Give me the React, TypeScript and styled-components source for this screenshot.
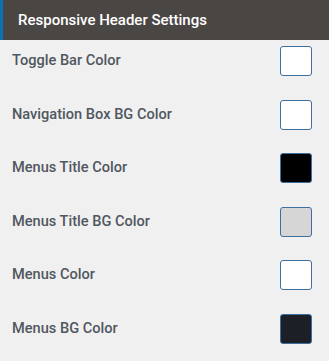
import styled, { createGlobalStyle } from 'styled-components'

const GlobalStyle = createGlobalStyle`
  body {
    margin: 0;
    background: #f0f0f1;
    font-family: Roboto, "Noto Sans", Arial, sans-serif;
  }
`

const Panel = styled.div`
  width: 329px;
  height: 361px;
  background: #f0f0f1;
  overflow: hidden;
`

const Header = styled.h3`
  margin: 0;
  height: 40px;
  display: flex;
  align-items: center;
  padding-left: 15px;
  background: #4a4644;
  border-left: 3px solid #0a73b5;
  color: #fff;
  font-size: 15px;
  font-weight: 500;
`

const List = styled.div`
  display: flex;
  flex-direction: column;
  gap: 23.6px;
  padding: 6px 17px 0 12px;
`

const Row = styled.div`
  display: flex;
  align-items: center;
  justify-content: space-between;
  height: 30px;
`

const Label = styled.span`
  color: #50575e;
  font-size: 14.6px;
  font-weight: 500;
  margin-top: -2px;
`

const Swatch = styled.button<{ $color: string }>`
  width: 32px;
  height: 30px;
  padding: 0;
  border: 1px solid #3d6fa0;
  border-radius: 3px;
  background: ${(p) => p.$color};
`

const settings = [
  { label: 'Toggle Bar Color', color: '#ffffff' },
  { label: 'Navigation Box BG Color', color: '#ffffff' },
  { label: 'Menus Title Color', color: '#000000' },
  { label: 'Menus Title BG Color', color: '#d6d6d6' },
  { label: 'Menus Color', color: '#ffffff' },
  { label: 'Menus BG Color', color: '#1c1f26' },
]

export default function App() {
  return (
    <Panel>
      <GlobalStyle />
      <Header>Responsive Header Settings</Header>
      <List>
        {settings.map((s) => (
          <Row key={s.label}>
            <Label>{s.label}</Label>
            <Swatch $color={s.color} />
          </Row>
        ))}
      </List>
    </Panel>
  )
}
